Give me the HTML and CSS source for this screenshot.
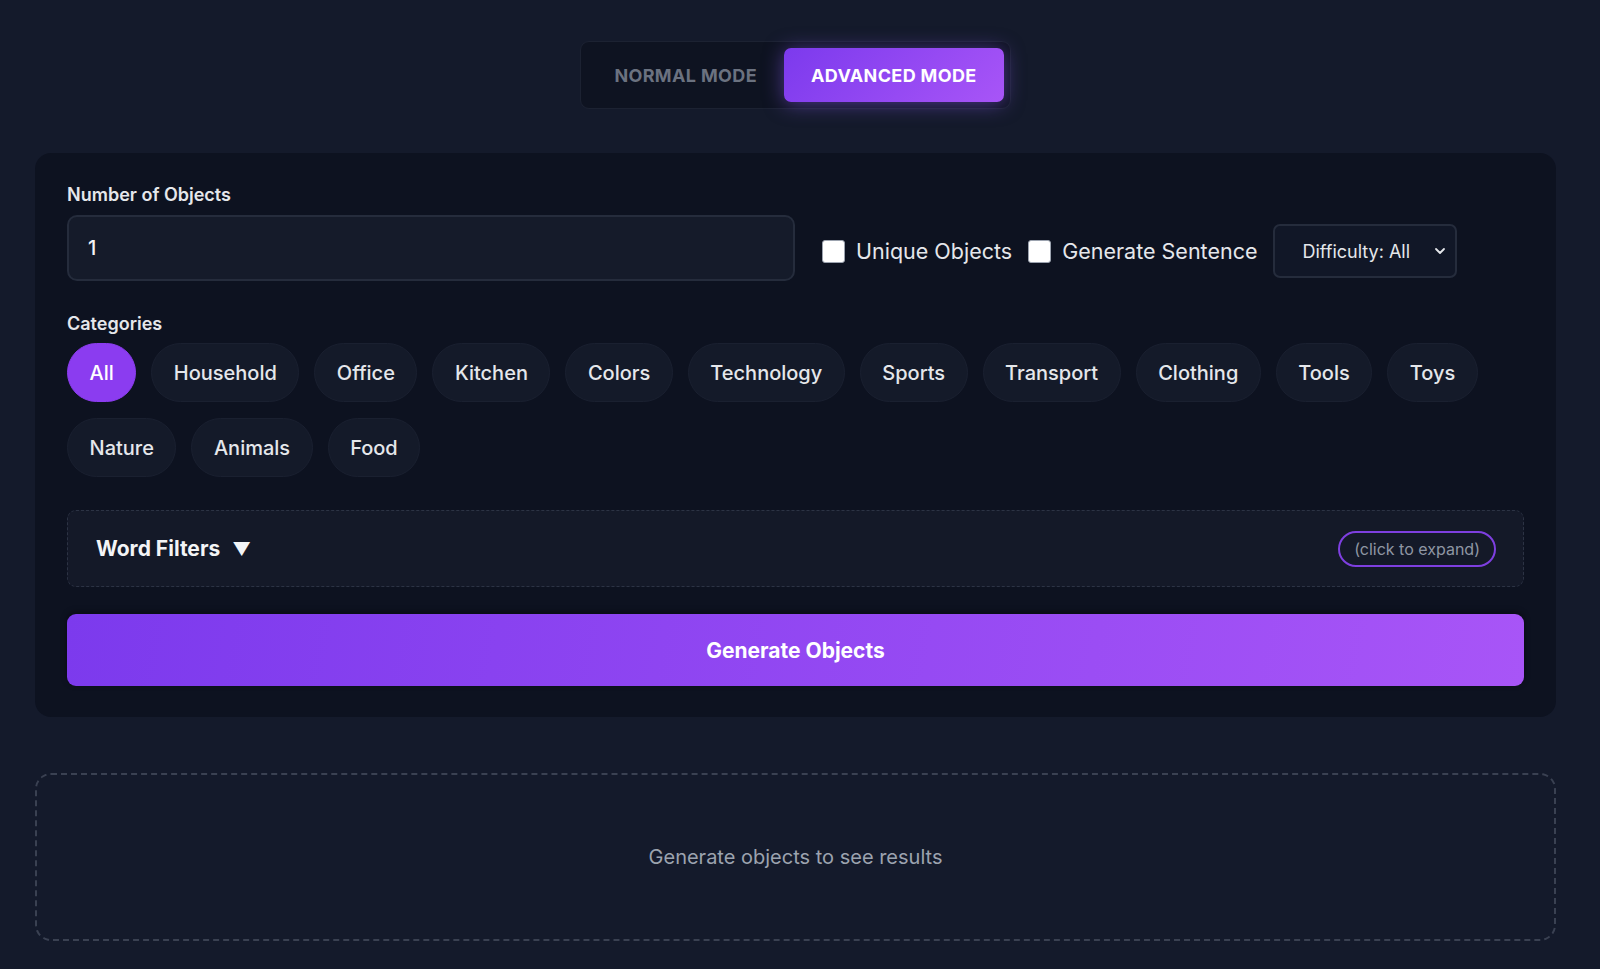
FILE: index.html
```html
<!DOCTYPE html>
<html lang="en">
<head>
<meta charset="utf-8">
<title>Object Generator</title>
<meta name="viewport" content="width=device-width,initial-scale=1">
<link rel="stylesheet" href="styles.css">
</head>
<body>

<main class="app">

  <!-- ===== Mode toggle ===== -->
  <div class="mode-toggle">
    <button class="mode-btn">NORMAL MODE</button>
    <button class="mode-btn active">ADVANCED MODE</button>
  </div>

  <!-- ===== Settings card ===== -->
  <section class="panel">
    <label class="field-label" for="count">Number of Objects</label>
    <div class="top-row">
      <input id="count" class="num-input" type="text" value="1">
      <label class="check"><span class="box"></span>Unique Objects</label>
      <label class="check"><span class="box"></span>Generate Sentence</label>
      <div class="select">
        <span>Difficulty: All</span>
        <svg width="12" height="8" viewBox="0 0 12 8"><path d="M2 2l4 4 4-4" fill="none" stroke="#e5e7eb" stroke-width="1.8" stroke-linecap="round" stroke-linejoin="round"/></svg>
      </div>
    </div>

    <div class="field-label cat-label">Categories</div>
    <div class="chips">
      <button class="chip active">All</button>
      <button class="chip">Household</button>
      <button class="chip">Office</button>
      <button class="chip">Kitchen</button>
      <button class="chip">Colors</button>
      <button class="chip">Technology</button>
      <button class="chip">Sports</button>
      <button class="chip">Transport</button>
      <button class="chip">Clothing</button>
      <button class="chip">Tools</button>
      <button class="chip">Toys</button>
      <button class="chip">Nature</button>
      <button class="chip">Animals</button>
      <button class="chip">Food</button>
    </div>

    <div class="filters">
      <div class="filters-title">Word Filters <span class="tri">&#9660;</span></div>
      <span class="expand-pill">(click to expand)</span>
    </div>

    <button class="generate-btn">Generate Objects</button>
  </section>

  <!-- ===== Results ===== -->
  <section class="results">
    <p>Generate objects to see results</p>
  </section>

</main>

</body>
</html>
```

FILE: styles.css
```css
/* ---------- Base ---------- */
*{margin:0;padding:0;box-sizing:border-box}
html,body{background:#141a2b;color:#e5e7eb;font-family:Inter,"Noto Sans",Arial,sans-serif}
button{font-family:inherit;border:none;cursor:pointer}
.app{padding:41px 44px 28px 35px;display:flex;flex-direction:column;align-items:center}

/* ---------- Mode toggle ---------- */
.mode-toggle{display:flex;padding:6px;background:#0e1321;border:1px solid #1c2232;border-radius:9px}
.mode-btn{height:54px;padding:0 27px;font-size:18px;font-weight:700;background:transparent;color:#6b7280;border-radius:7px;letter-spacing:.02em}
.mode-btn.active{color:#fff;background:linear-gradient(135deg,#7c3aed,#a855f7);box-shadow:0 2px 20px rgba(139,92,246,.5)}

/* ---------- Panel ---------- */
.panel{width:100%;margin-top:44px;background:#0d1220;border-radius:16px;padding:31px 32px 31px}
.field-label{display:block;font-size:18px;font-weight:600;color:#e5e7eb;margin-bottom:10px}
.top-row{display:flex;align-items:center}
.num-input{width:728px;height:66px;background:#151b2a;border:2px solid #252c3c;border-radius:10px;color:#f3f4f6;font:500 20px Inter,sans-serif;padding:0 19px}
.check{display:flex;align-items:center;gap:11px;font-size:21.5px;color:#e5e7eb;margin:6px 0 0 16px}
.check:first-of-type{margin-left:27px}
.box{width:23px;height:23px;background:#fff;border-radius:3px;border:1px solid #9ca3af}
.select{margin:6px 0 0 16px;width:184px;height:54px;display:flex;align-items:center;justify-content:space-between;padding:0 9px 0 27px;background:#111727;border:2px solid #252c3c;border-radius:7px;font-size:18px;color:#e5e7eb}
.cat-label{margin-top:32px;margin-bottom:9px}

/* ---------- Chips ---------- */
.chips{display:flex;flex-wrap:wrap;gap:16px 15px;max-width:1480px}
.chip{height:59px;padding:0 21.5px;border-radius:30px;font-size:20px;font-weight:500;color:#e5e7eb;background:#141a29;border:1px solid #1a2030}
.chip.active{background:#8b3cf0;border-color:#8b3cf0;color:#fff}

/* ---------- Word filters ---------- */
.filters{margin-top:33px;height:77px;display:flex;align-items:center;justify-content:space-between;padding:0 27px 0 28px;background:#141928;border:1px dashed #2c3344;border-radius:9px}
.filters-title{font-size:21px;font-weight:700;color:#f3f4f6;display:flex;align-items:center;gap:12px}
.tri{font-size:18px}
.expand-pill{height:36px;padding:0 14px;display:flex;align-items:center;border:2px solid #7e3fe0;border-radius:18px;font-size:16px;color:#8f96a3}

/* ---------- Generate ---------- */
.generate-btn{width:100%;height:72px;margin-top:27px;border-radius:9px;font-size:21px;font-weight:700;color:#fff;background:linear-gradient(100deg,#7c3aed,#a855f7);box-shadow:0 -2px 6px rgba(0,0,0,.4)}

/* ---------- Results ---------- */
.results{width:100%;margin-top:56px;height:168px;border:2px dashed #3a4152;border-radius:16px;display:flex;align-items:center;justify-content:center}
.results p{font-size:20px;color:#9ca3af}
```
